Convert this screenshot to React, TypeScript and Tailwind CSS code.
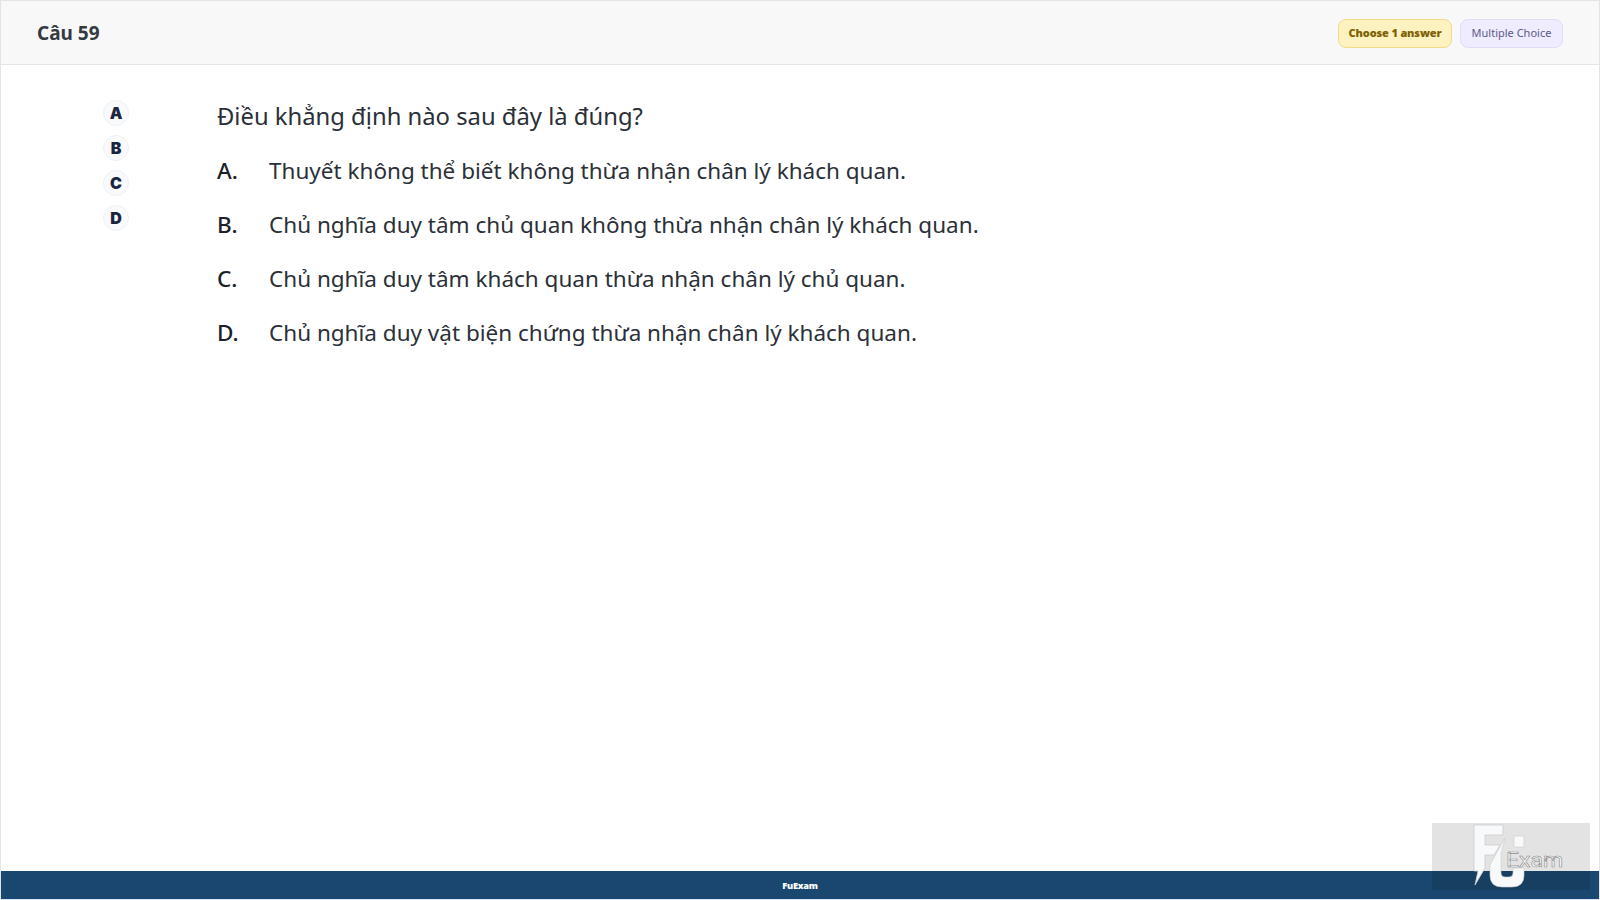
const options = [
  ["A.", "Thuyết không thể biết không thừa nhận chân lý khách quan."],
  ["B.", "Chủ nghĩa duy tâm chủ quan không thừa nhận chân lý khách quan."],
  ["C.", "Chủ nghĩa duy tâm khách quan thừa nhận chân lý chủ quan."],
  ["D.", "Chủ nghĩa duy vật biện chứng thừa nhận chân lý khách quan."],
];

function Logo() {
  return (
    <div className="absolute left-[1431px] top-[822px] flex h-[67px] w-[158px] items-center justify-center bg-black/[0.11]">
      <svg viewBox="0 0 158 67" className="h-[67px] w-[158px]">
        <path d="M42 2H71V12H53V22H68L62 32H53V45L43 62L46 48H42Z" fill="#f8f9fb" stroke="#cdcdcd" strokeWidth="0.8" />
        <path d="M73 15L58 42V52Q58 64 70 64H80Q92 64 92 52V45H81V50Q81 54 77 54H73Q69 54 69 50V30Z" fill="#f8f9fb" stroke="#cdcdcd" strokeWidth="0.6" />
        <rect x="82" y="13" width="10" height="11" fill="#f8f9fb" stroke="#cdcdcd" strokeWidth="0.6" />
        <text x="74" y="44" fontFamily="Roboto, sans-serif" fontSize="20" textLength="57" lengthAdjust="spacingAndGlyphs" fill="#ffffff" stroke="#8f8f8f" strokeWidth="0.6">Exam</text>
      </svg>
    </div>
  );
}

export default function App() {
  return (
    <div className="relative flex h-[900px] w-[1600px] flex-col overflow-hidden border border-[#e3e4e8] bg-white font-['Noto_Sans','Open_Sans',sans-serif]">
      <header className="flex h-[64px] shrink-0 items-center justify-between border-b border-[#e4e5e7] bg-[#f8f8f8] pl-[36px] pr-[36px] pt-[2px]">
        <h1 className="text-[19px] font-bold text-[#333a42]">Câu 59</h1>
        <div className="flex items-center gap-2">
          <span className="flex h-[29px] w-[114px] items-center justify-center rounded-lg border border-[#f3d98a] bg-[#fef3c0] text-[11px] font-black tracking-[-0.15px] text-[#7f6207]">Choose 1 answer</span>
          <span className="flex h-[29px] w-[103px] items-center justify-center rounded-lg border border-[#dfdcf8] bg-[#eeecfe] text-[11px] text-[#5d5a88]">Multiple Choice</span>
        </div>
      </header>
      <main className="flex flex-1 pl-[102px] pt-[35px]">
        <div className="mr-[88px] flex w-[26px] flex-col gap-[9px]">
          {["A", "B", "C", "D"].map((l) => (
            <div key={l} className="flex size-[26px] items-center justify-center rounded-full border border-[#eef1f5] bg-[#f8fafc] font-['Inter',sans-serif] text-[16px] font-black text-[#1b2540]">{l}</div>
          ))}
        </div>
        <div className="text-[#2b3038]">
          <p className="mb-[23px] text-[23.8px] leading-[32px]">Điều khẳng định nào sau đây là đúng?</p>
          <ul className="flex flex-col gap-[22px]">
            {options.map(([k, t]) => (
              <li key={k} className="flex text-[22.5px] leading-[32px]">
                <span className="w-[52px] font-medium text-[#1c2028]">{k}</span>
                <span>{t}</span>
              </li>
            ))}
          </ul>
        </div>
      </main>
      <footer className="flex h-[28px] shrink-0 items-center justify-center bg-[#19476f] pt-px text-[9.2px] font-black tracking-[-0.2px] text-white">FuExam</footer>
      <Logo />
    </div>
  );
}
